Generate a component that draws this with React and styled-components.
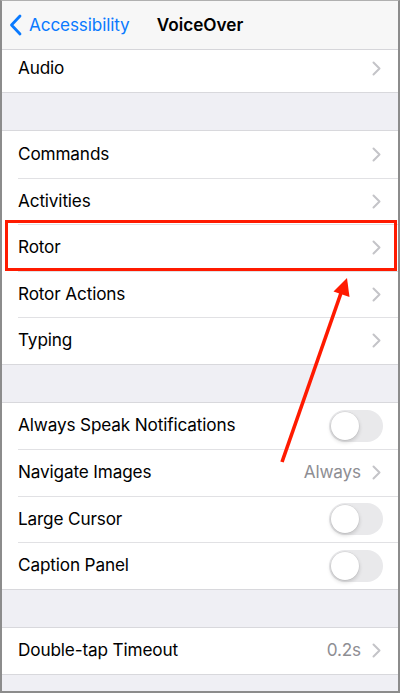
import React from 'react';
import styled, { createGlobalStyle } from 'styled-components';

const GlobalStyle = createGlobalStyle`
  html, body { margin: 0; padding: 0; background: #fff; }
  body { font-family: "Inter", "Roboto", "Liberation Sans", sans-serif; }
`;

const Frame = styled.div`
  position: relative;
  box-sizing: border-box;
  width: 400px;
  height: 693px;
  overflow: hidden;
  background: #efeff4;
  border: 2px solid #8c8c8c;
  border-top: 1px solid #b0b0b0;
  display: flex;
  flex-direction: column;
`;

const NavBar = styled.div`
  flex: 0 0 auto;
  height: 48px;
  display: flex;
  align-items: center;
  position: relative;
  background: #f7f7f7;
  border-bottom: 1px solid #d6d6da;
`;

const BackButton = styled.div`
  display: flex;
  align-items: center;
  gap: 7px;
  padding-left: 7px;
  padding-bottom: 1px;
  color: #0a7aff;
  font-size: 17.2px;
  letter-spacing: -0.15px;
`;

const Title = styled.div`
  position: absolute;
  left: 0;
  right: 0;
  padding-bottom: 1px;
  text-align: center;
  font-weight: 600;
  font-size: 17.2px;
  color: #000;
  pointer-events: none;
`;

const Group = styled.div`
  background: #fff;
  border-top: ${(p) => (p.$noTop ? 'none' : '1px solid #d8d8dc')};
  border-bottom: 1px solid #d8d8dc;
`;

const Gap = styled.div`
  height: ${(p) => p.$h}px;
  flex: 0 0 auto;
`;

const Row = styled.div`
  position: relative;
  height: ${(p) => p.$h || 46.5}px;
  padding-bottom: ${(p) => p.$shift || 2}px;
  box-sizing: border-box;
  display: flex;
  align-items: center;
  padding-left: 16px;
  padding-right: 15px;
  font-size: 17.2px;
  color: #000;
  letter-spacing: -0.15px;

  & + & {
    border-top: 1px solid #e1e1e4;
  }
  & + &::before {
    content: '';
    position: absolute;
    left: 0;
    top: -1px;
    width: 16px;
    height: 1px;
    background: #fff;
  }
`;

const Label = styled.span`
  flex: 1;
`;

const Value = styled.span`
  color: #8e8e93;
  margin-right: 11px;
`;

const Chevron = () => (
  <svg width="9" height="15" viewBox="0 0 9 15" style={{ marginRight: 2, marginTop: 2 }}>
    <path d="M1.5 1.5 L7.5 7.5 L1.5 13.5" fill="none" stroke="#c4c4c8" strokeWidth="2" strokeLinecap="round" strokeLinejoin="round" />
  </svg>
);

const Track = styled.div`
  width: 54px;
  height: 32px;
  margin-top: 2px;
  border-radius: 16px;
  background: #e9e9eb;
  position: relative;
`;

const Knob = styled.div`
  position: absolute;
  left: 2px;
  top: 2px;
  width: 28px;
  height: 28px;
  border-radius: 50%;
  background: #fff;
  box-shadow: 0 2px 4px rgba(0, 0, 0, 0.18), 0 0 0 0.5px rgba(0, 0, 0, 0.08);
`;

const Toggle = () => (
  <Track>
    <Knob />
  </Track>
);

const Highlight = styled.div`
  position: absolute;
  left: 3px;
  top: 219px;
  width: 392px;
  height: 51px;
  box-sizing: border-box;
  border: 3px solid #ff1a00;
  pointer-events: none;
`;

const ArrowSvg = styled.svg`
  position: absolute;
  left: 0;
  top: 0;
  pointer-events: none;
`;

const Spacer = styled.div`
  flex: 1;
`;

const group1 = ['Commands', 'Activities', 'Rotor', 'Rotor Actions', 'Typing'];

export default function App() {
  return (
    <>
      <GlobalStyle />
      <Frame>
        <NavBar>
          <BackButton>
            <svg width="13" height="22" viewBox="0 0 13 22">
              <path d="M11 2 L2.5 11 L11 20" fill="none" stroke="#0a7aff" strokeWidth="2.8" strokeLinecap="round" strokeLinejoin="round" />
            </svg>
            Accessibility
          </BackButton>
          <Title>VoiceOver</Title>
        </NavBar>
        <Group $noTop>
          <Row $h={42} $shift={7}>
            <Label>Audio</Label>
            <Chevron />
          </Row>
        </Group>
        <Gap $h={37} />
        <Group>
          {group1.map((t) => (
            <Row key={t}>
              <Label>{t}</Label>
              <Chevron />
            </Row>
          ))}
        </Group>
        <Gap $h={37} />
        <Group>
          <Row>
            <Label>Always Speak Notifications</Label>
            <Toggle />
          </Row>
          <Row>
            <Label>Navigate Images</Label>
            <Value>Always</Value>
            <Chevron />
          </Row>
          <Row>
            <Label>Large Cursor</Label>
            <Toggle />
          </Row>
          <Row>
            <Label>Caption Panel</Label>
            <Toggle />
          </Row>
        </Group>
        <Gap $h={37} />
        <Group>
          <Row>
            <Label>Double-tap Timeout</Label>
            <Value>0.2s</Value>
            <Chevron />
          </Row>
        </Group>
        <Spacer />
        <Highlight />
        <ArrowSvg width="400" height="693" viewBox="0 0 400 693">
          <line x1="280" y1="461" x2="339" y2="292" stroke="#ff1a00" strokeWidth="3.6" />
          <polygon points="345,277 347.5,296 331.5,290.5" fill="#ff1a00" />
        </ArrowSvg>
      </Frame>
    </>
  );
}
